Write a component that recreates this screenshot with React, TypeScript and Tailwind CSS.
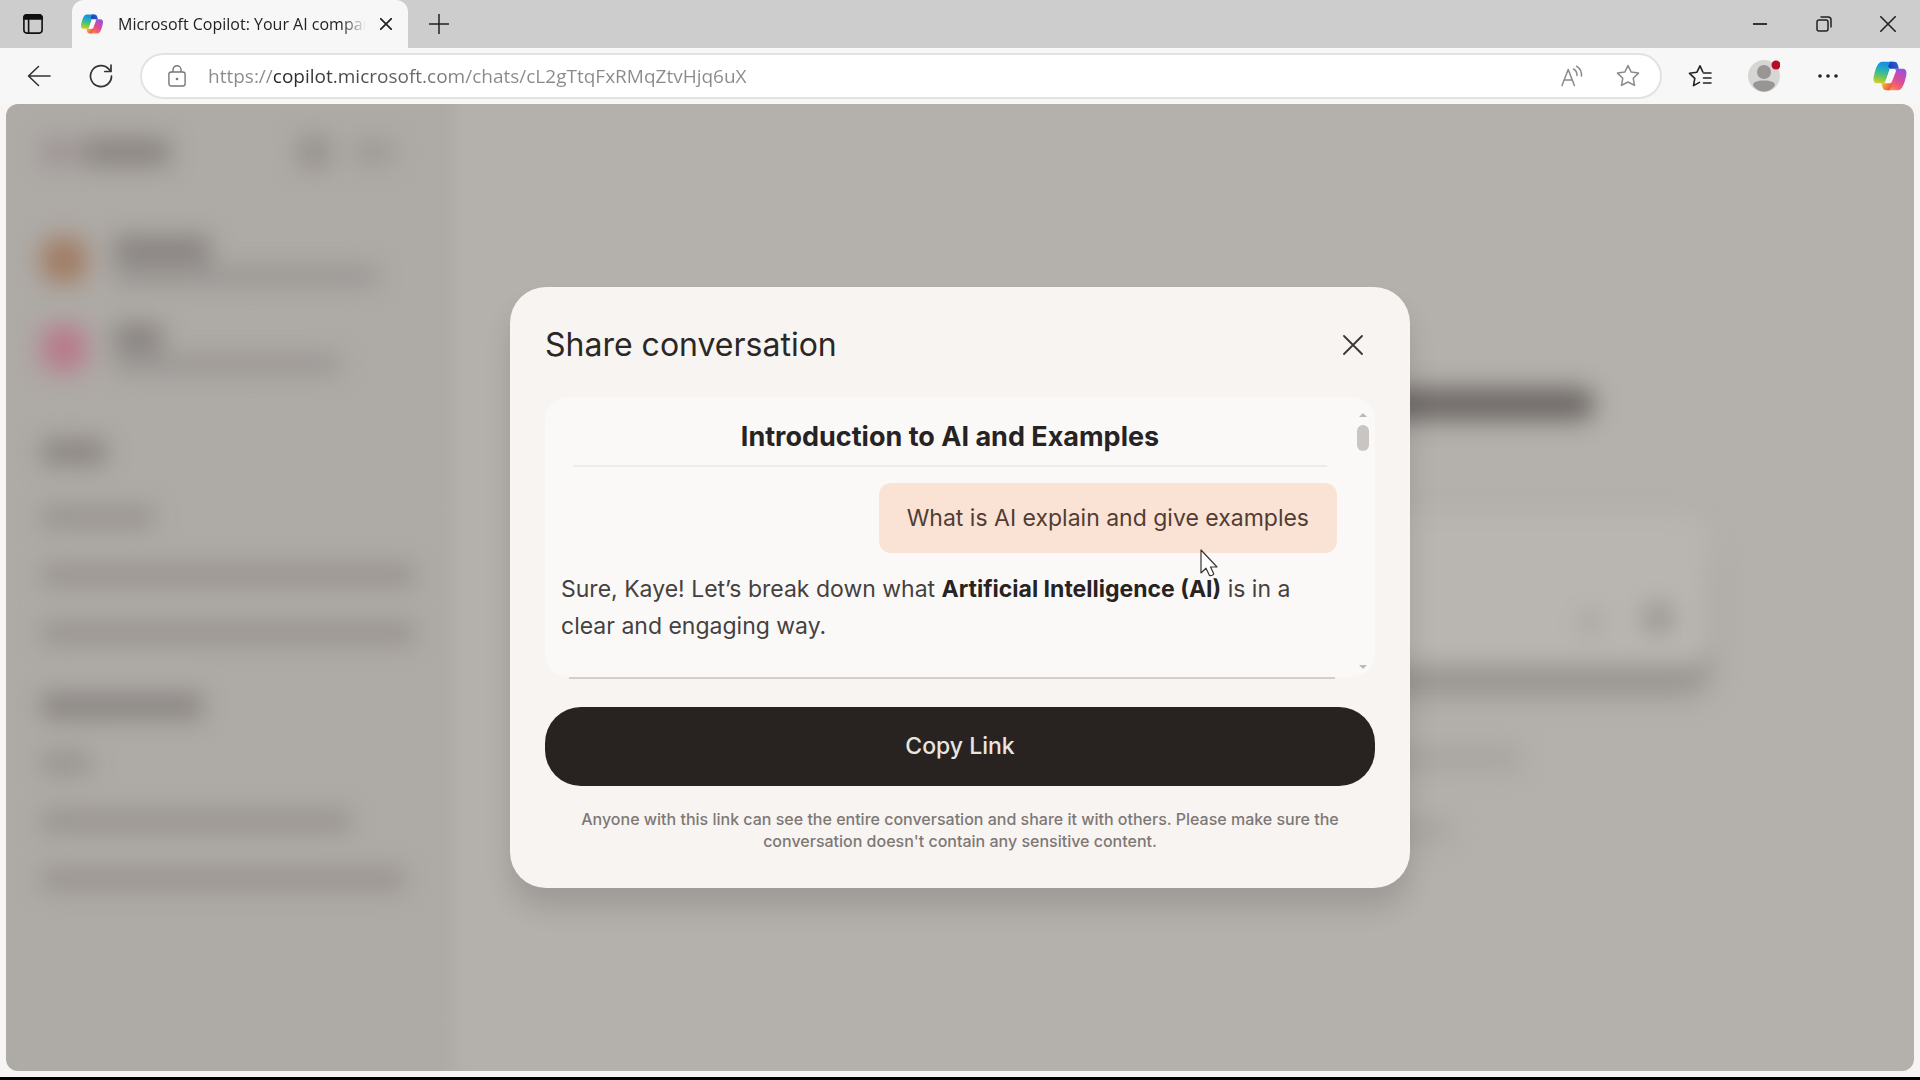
import React from "react";

interface IconProps {
  className?: string;
}

interface PlaceholderRowProps {
  className: string;
}

const CopilotLogo: React.FC<IconProps & { id: string }> = ({ id, className }) => (
  <svg viewBox="0 0 48 48" className={className} aria-hidden="true">
    <defs>
      <linearGradient id={`${id}-left`} x1="16" y1="5" x2="10" y2="34" gradientUnits="userSpaceOnUse">
        <stop offset="0.1" stopColor="#1793e0" />
        <stop offset="0.45" stopColor="#2fb8a6" />
        <stop offset="0.75" stopColor="#7fc84a" />
        <stop offset="1" stopColor="#d8d02c" />
      </linearGradient>
      <linearGradient id={`${id}-right`} x1="40" y1="15" x2="24" y2="43" gradientUnits="userSpaceOnUse">
        <stop offset="0" stopColor="#9a50e0" />
        <stop offset="0.45" stopColor="#d84a9c" />
        <stop offset="0.75" stopColor="#f2636a" />
        <stop offset="1" stopColor="#fb9a5c" />
      </linearGradient>
      <linearGradient id={`${id}-top`} x1="24" y1="14" x2="36" y2="8" gradientUnits="userSpaceOnUse">
        <stop offset="0" stopColor="#1c3fb4" />
        <stop offset="1" stopColor="#2a63dc" />
      </linearGradient>
      <linearGradient id={`${id}-bottom`} x1="14" y1="34" x2="24" y2="40" gradientUnits="userSpaceOnUse">
        <stop offset="0" stopColor="#f5b63c" />
        <stop offset="1" stopColor="#ee5a3c" />
      </linearGradient>
    </defs>
    <path fill={`url(#${id}-left)`} d="M29.5 5H13.46c-4.583 0-7.333 6.014-9.166 12.028-2.172 7.125-5.015 16.654 3.209 16.654h6.927a4.625 4.625 0 0 0 4.443-3.337c1.198-4.193 3.298-11.509 4.947-17.078.838-2.83 1.536-5.26 2.608-6.774C27.03 5.645 28.031 5 29.5 5" />
    <path fill={`url(#${id}-right)`} d="M18.498 43h16.04c4.582 0 7.332-6.015 9.165-12.03 2.172-7.127 5.015-16.658-3.208-16.658H33.56a4.63 4.63 0 0 0-4.444 3.341 3088 3088 0 0 1-4.946 17.08c-.839 2.831-1.536 5.26-2.608 6.775-.601.85-1.601 1.492-3.064 1.492" />
    <path fill={`url(#${id}-top)`} d="M24 5h5.7a4.625 4.625 0 0 1 4.44 3.325l1.8 6H24.5l-3-3z" />
    <path fill={`url(#${id}-bottom)`} d="M12.5 33.5h13l2 2-4 7.5h-4.73a4.625 4.625 0 0 1-4.44-3.35z" />
    <path fill="#f7f7f7" stroke="#f7f7f7" strokeWidth="3" strokeLinejoin="round" d="M25 17h5.5L25 31.5h-6z" />
  </svg>
);

const TabActionsIcon: React.FC = () => (
  <svg viewBox="0 0 20 20" className="size-5" fill="none" stroke="#111" strokeWidth="1.6">
    <rect x="0.9" y="0.9" width="18.2" height="18.2" rx="3" />
    <path d="M1 3.6A2.6 2.6 0 0 1 3.6 1h12.8A2.6 2.6 0 0 1 19 3.6V5H1z" fill="#111" />
    <path d="M5.6 5v14" />
  </svg>
);

const CloseIcon: React.FC<IconProps> = ({ className }) => (
  <svg viewBox="0 0 20 20" className={className} fill="none" stroke="currentColor" strokeLinecap="round">
    <path d="M1 1l18 18M19 1L1 19" />
  </svg>
);

const PlusIcon: React.FC = () => (
  <svg viewBox="0 0 20 20" className="size-5" fill="none" stroke="#222" strokeWidth="1.5">
    <path d="M10 0v20M0 10h20" />
  </svg>
);

const BackIcon: React.FC = () => (
  <svg viewBox="0 0 24 22" className="h-[22px] w-6" fill="none" stroke="#333" strokeWidth="1.6" strokeLinecap="round" strokeLinejoin="round">
    <path d="M23 11H1.5M11.5 1.5L1.5 11l10 9.5" />
  </svg>
);

const RefreshIcon: React.FC = () => (
  <svg viewBox="0 0 24 24" className="size-6" fill="none" stroke="#333" strokeWidth="1.7" strokeLinecap="round" strokeLinejoin="round">
    <path d="M22.5 12A10.5 10.5 0 1 1 20 5.3L21.5 7.2" />
    <path d="M22 1.2v6.3h-6.2" />
  </svg>
);

const LockIcon: React.FC = () => (
  <svg viewBox="0 0 18 22" className="h-[22px] w-[18px]" fill="none" stroke="#777" strokeWidth="1.4">
    <rect x="0.9" y="7" width="16.2" height="14" rx="2.2" />
    <path d="M5 7V4.8a4 4 0 0 1 8 0V7" />
    <circle cx="9" cy="14" r="1.3" fill="#777" stroke="none" />
  </svg>
);

const ReadAloudIcon: React.FC = () => (
  <svg viewBox="0 0 24 22" className="h-[22px] w-6" fill="none" stroke="#8a8a8a" strokeWidth="1.5" strokeLinecap="round" strokeLinejoin="round">
    <path d="M2 20.5L8.2 4.5l6.2 16M4.2 15h8" />
    <path d="M13.5 4a7 7 0 0 1 3.5 6.5M16.5 1.2a11 11 0 0 1 5 9.8" />
  </svg>
);

const StarIcon: React.FC = () => (
  <svg viewBox="0 0 24 24" className="size-6" fill="none" stroke="#8a8a8a" strokeWidth="1.5" strokeLinejoin="round">
    <path d="M12 1.5l3.2 6.6 7.3 1-5.3 5.1 1.3 7.2L12 18l-6.5 3.4 1.3-7.2L1.5 9.1l7.3-1z" />
  </svg>
);

const FavoritesIcon: React.FC = () => (
  <svg viewBox="0 0 24 24" className="size-6" fill="none" stroke="#222" strokeWidth="1.6" strokeLinecap="round" strokeLinejoin="round">
    <path d="M14.8 7.8L12 1.8 8.8 8.3l-7.3 1 5.3 5.1-1.3 7.2 6-3.2" />
    <path d="M15.5 9H23M15.5 14H23M15.5 19H23" />
  </svg>
);

const RestoreIcon: React.FC = () => (
  <svg viewBox="0 0 16 16" className="size-4" fill="none" stroke="#222" strokeWidth="1.5">
    <rect x="1" y="4" width="11" height="11" rx="2" />
    <path d="M4.5 1H12a3 3 0 0 1 3 3v7.5" />
  </svg>
);

const Cursor: React.FC<IconProps> = ({ className }) => (
  <svg viewBox="0 0 18 28" className={className} fill="#fff" stroke="#3a3433" strokeWidth="1.2" strokeLinejoin="round" aria-hidden="true">
    <path d="M1 1v23l5-4.8 3.5 7.3c1.8.6 4-.6 4.2-1.7L10.5 18H17z" />
  </svg>
);

const PlaceholderRow: React.FC<PlaceholderRowProps> = ({ className }) => (
  <div className="flex h-[58px] items-center">
    <div className={`bg-[#96918d] ${className}`} />
  </div>
);

const TitleBar: React.FC = () => (
  <header className="flex h-12 items-stretch bg-[#cdcdcd]">
    <button type="button" aria-label="Tab actions" className="flex w-[66px] items-center justify-center">
      <TabActionsIcon />
    </button>
    <div className="ml-1.5 flex w-[336px] items-center rounded-t-xl bg-[#f7f7f7] pr-2.5 pl-2">
      <CopilotLogo id="tab" className="size-6 shrink-0" />
      <span className="ml-3.5 min-w-0 flex-1 overflow-hidden mask-r-from-90% text-[16px] leading-6 whitespace-nowrap text-[#222]">
        Microsoft Copilot: Your AI companion
      </span>
      <button type="button" aria-label="Close tab" className="ml-2 flex size-6 items-center justify-center text-[#222]">
        <CloseIcon className="size-3 stroke-[2.8]" />
      </button>
    </div>
    <button type="button" aria-label="New tab" className="ml-1.5 flex w-[50px] items-center justify-center">
      <PlusIcon />
    </button>
    <div className="ml-auto flex text-[#222]">
      <button type="button" aria-label="Minimize" className="flex w-16 items-center justify-center">
        <span className="h-0.5 w-3.5 bg-[#333]" />
      </button>
      <button type="button" aria-label="Restore" className="flex w-16 items-center justify-center">
        <RestoreIcon />
      </button>
      <button type="button" aria-label="Close window" className="flex w-16 items-center justify-center">
        <CloseIcon className="size-4 stroke-2" />
      </button>
    </div>
  </header>
);

const Toolbar: React.FC = () => (
  <nav className="flex h-14 items-center bg-[#f7f7f7] pl-2">
    <button type="button" aria-label="Back" className="flex w-[62px] justify-center">
      <BackIcon />
    </button>
    <button type="button" aria-label="Refresh" className="flex w-[62px] justify-center">
      <RefreshIcon />
    </button>
    <div className="ml-2 flex h-[46px] flex-1 items-center rounded-full border-2 border-[#e4e2e1] bg-white pr-1 pl-6.5">
      <LockIcon />
      <input
        type="text"
        aria-label="Address"
        readOnly
        value="https://copilot.microsoft.com/chats/cL2gTtqFxRMqZtvHjq6uX"
        className="ml-5.5 min-w-0 flex-1 bg-linear-to-r from-[#8a8a8a] from-[66px] via-[#222] via-[66px] to-[#8a8a8a] to-[264px] bg-clip-text text-[19px] text-transparent outline-none"
      />
      <button type="button" aria-label="Read aloud" className="flex w-14 justify-center">
        <ReadAloudIcon />
      </button>
      <button type="button" aria-label="Add to favorites" className="flex w-14 justify-center">
        <StarIcon />
      </button>
    </div>
    <button type="button" aria-label="Favorites" className="ml-1.5 flex w-16 justify-center">
      <FavoritesIcon />
    </button>
    <button type="button" aria-label="Profile" className="flex w-16 justify-center">
      <svg viewBox="0 0 32 32" className="size-8">
        <circle cx="16" cy="16" r="16" fill="#d6d6d4" />
        <circle cx="16" cy="12" r="7" fill="#989594" />
        <path d="M5 25c0-3 4-4.5 11-4.5S27 22 27 25c-2 4-6 6.5-11 6.5S7 29 5 25z" fill="#989594" />
        <circle cx="28" cy="5" r="4.5" fill="#b80d26" />
      </svg>
    </button>
    <button type="button" aria-label="Settings and more" className="flex w-16 justify-center">
      <svg viewBox="0 0 20 4" className="h-1 w-5" fill="#222">
        <circle cx="2" cy="2" r="1.8" />
        <circle cx="10" cy="2" r="1.8" />
        <circle cx="18" cy="2" r="1.8" />
      </svg>
    </button>
    <button type="button" aria-label="Copilot" className="flex w-[60px] justify-center">
      <CopilotLogo id="toolbar" className="size-9" />
    </button>
  </nav>
);

/* Chat page behind the dialog, out of focus */
const BlurredPage: React.FC = () => (
  <div className="flex flex-1" aria-hidden="true">
    <aside className="w-[460px] bg-linear-to-r from-[#aeaaa6] from-95% to-[#b4b0ac]">
      <div className="px-9 pt-8 blur-[12px]">
        <div className="flex h-8 items-center">
          <div className="h-7 w-8 bg-[#9d9395]" />
          <div className="ml-2 h-7 w-22 bg-[#8a8581]" />
          <div className="ml-32 h-8 w-8 bg-[#96918d]" />
          <div className="ml-6 h-6 w-10 bg-[#9e9996]" />
        </div>
        <div className="mt-12 flex h-[88px] items-center">
          <div className="size-11 rounded-xl bg-[#a17c62]" />
          <div className="ml-7">
            <div className="h-7 w-24 bg-[#888380]" />
            <div className="mt-1 h-4 w-[264px] bg-[#979390]" />
          </div>
        </div>
        <div className="flex h-[88px] items-center">
          <div className="size-11 rounded-xl bg-[#b8798b]" />
          <div className="ml-7">
            <div className="h-7 w-12 bg-[#888380]" />
            <div className="mt-1 h-4 w-[226px] bg-[#979390]" />
          </div>
        </div>
        <div className="mt-9 flex h-12 items-center">
          <div className="h-6 w-16 bg-[#888380]" />
        </div>
        <div className="mt-3">
          <PlaceholderRow className="h-5 w-28" />
          <PlaceholderRow className="h-5 w-[372px]" />
          <PlaceholderRow className="h-5 w-[372px]" />
        </div>
        <div className="mt-4 flex h-14 items-center">
          <div className="h-6 w-40 bg-[#888380]" />
        </div>
        <PlaceholderRow className="h-5 w-12" />
        <PlaceholderRow className="h-5 w-[308px]" />
        <PlaceholderRow className="h-5 w-[362px]" />
      </div>
    </aside>
    <main className="flex flex-1 justify-center bg-[#b4b0ac]">
      <div className="flex w-[1040px] flex-col items-center pt-[284px] blur-[12px]">
        <div className="h-8 w-[810px] rounded-full bg-[#6c6764]" />
        <div className="mt-24 flex h-[150px] w-full items-end justify-end gap-10 rounded-3xl bg-[#b9b5b1] pr-9 pb-8 shadow-[0_28px_16px_#96928e]">
          <div className="size-6 bg-[#aaa6a2]" />
          <div className="size-8 rounded-full bg-[#9b9693]" />
        </div>
        <div className="mt-20 h-6 w-[660px] bg-[#a8a4a0]" />
        <div className="mt-12 h-6 w-[520px] bg-[#a8a4a0]" />
      </div>
    </main>
  </div>
);

const ShareDialog: React.FC = () => (
  <section
    role="dialog"
    aria-labelledby="share-title"
    className="w-[900px] max-w-full rounded-[36px] bg-[#f8f4f1] px-[35px] pt-9 pb-9 font-['Inter',sans-serif] shadow-[0_20px_28px_#0000001f]"
  >
    <div className="flex h-11 items-center justify-between pr-3">
      <h2 id="share-title" className="text-[32px] leading-[44px] text-[#2b2725]">Share conversation</h2>
      <button type="button" aria-label="Close" className="flex size-5 items-center justify-center text-[#3a3634]">
        <CloseIcon className="size-5 stroke-[1.8]" />
      </button>
    </div>

    {/* Conversation preview */}
    <div className="mt-[30px] flex h-[280px] rounded-3xl bg-[#fbf9f7] pt-4">
      <div className="flex-1 pl-4">
        <h3 className="mr-6 ml-3 border-b-2 border-[#eeebe8] pt-2 pb-3 text-center text-[27px] leading-8 font-bold text-[#262322]">
          Introduction to AI and Examples
        </h3>
        <div className="mt-4 mr-3.5 flex justify-end">
          <div className="relative rounded-xl bg-[#fae3d4] px-7 py-4 text-[23px] leading-[38px] text-[#513d34]">
            What is AI explain and give examples
            <Cursor className="absolute right-[119px] -bottom-6 h-7 w-[18px]" />
          </div>
        </div>
        <p className="mt-[18px] mr-12 text-[23px] leading-[37px] text-[#45413f]">
          Sure, Kaye! Let’s break down what <strong className="font-bold text-[#262322]">Artificial Intelligence (AI)</strong> is in a clear and engaging way.
        </p>
      </div>
      <div className="flex w-6 flex-col items-center pb-2" aria-hidden="true">
        <svg viewBox="0 0 8 4" className="h-1 w-2" fill="#bdb9b7">
          <path d="M0 4l4-4 4 4z" />
        </svg>
        <div className="mt-2 h-[26px] w-3 rounded-full bg-[#c9c5c3]" />
        <svg viewBox="0 0 8 4" className="mt-auto h-1 w-2" fill="#bdb9b7">
          <path d="M0 0l4 4 4-4z" />
        </svg>
      </div>
    </div>
    <hr className="mr-10 ml-6 border-t-2 border-[#d3cfcc]" />

    <button type="button" className="mt-7 h-[79px] w-full rounded-[36px] bg-[#282320] text-[23px] font-medium text-[#e9e5e2]">
      Copy Link
    </button>
    <p className="mx-6 mt-[22px] text-center text-[16px] leading-[22px] font-medium text-[#7d7876]">
      Anyone with this link can see the entire conversation and share it with others. Please make sure the conversation doesn't contain any sensitive content.
    </p>
  </section>
);

const App: React.FC = () => {
  return (
    <div className="flex min-h-screen flex-col border-b-[3px] border-black bg-[#f7f5f4] font-['Open_Sans',sans-serif]">
      <TitleBar />
      <Toolbar />
      <div className="relative mx-1.5 mb-1.5 flex flex-1 overflow-hidden rounded-xl">
        <BlurredPage />
        <div className="absolute inset-0 flex items-center justify-center">
          <ShareDialog />
        </div>
      </div>
    </div>
  );
};

export default App;
